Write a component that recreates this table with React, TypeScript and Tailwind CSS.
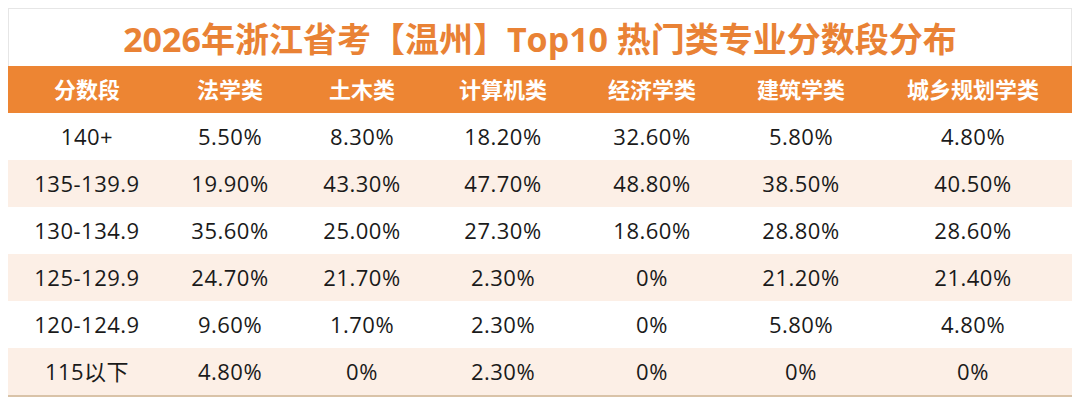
const cols = ["分数段", "法学类", "土木类", "计算机类", "经济学类", "建筑学类", "城乡规划学类"];

const rows = [
  ["140+", "5.50%", "8.30%", "18.20%", "32.60%", "5.80%", "4.80%"],
  ["135-139.9", "19.90%", "43.30%", "47.70%", "48.80%", "38.50%", "40.50%"],
  ["130-134.9", "35.60%", "25.00%", "27.30%", "18.60%", "28.80%", "28.60%"],
  ["125-129.9", "24.70%", "21.70%", "2.30%", "0%", "21.20%", "21.40%"],
  ["120-124.9", "9.60%", "1.70%", "2.30%", "0%", "5.80%", "4.80%"],
  ["115以下", "4.80%", "0%", "2.30%", "0%", "0%", "0%"],
];

const grid = "grid grid-cols-[158px_128px_136px_146px_152px_146px_198px]";

export default function App() {
  return (
    <div
      className="h-[405px] w-[1080px] bg-white px-2 pt-2"
      style={{ fontFamily: '"Open Sans", "Noto Sans CJK SC", sans-serif' }}
    >
      <div className="flex h-[58px] items-center justify-center border-x border-t border-[#e6e6e6] pt-1 text-[34px] font-bold text-[#e98235]">
        2026年浙江省考【温州】Top10 热门类专业分数段分布
      </div>

      <div className={`${grid} h-[47px] items-center bg-[#ed8533] text-[22px] font-bold text-white`}>
        {cols.map((c) => (
          <div key={c} className="text-center">
            {c}
          </div>
        ))}
      </div>

      <div className="border-b-2 border-[#d9c3a8]">
        {rows.map((r, i) => (
          <div
            key={r[0]}
            className={`${grid} h-[47px] items-center text-[22px] tracking-[0.5px] text-[#1a1a1a] ${
              i % 2 === 1 ? "bg-[#fcefe6]" : "bg-white"
            }`}
          >
            {r.map((v, j) => (
              <div key={j} className="text-center">
                {v}
              </div>
            ))}
          </div>
        ))}
      </div>
    </div>
  );
}
